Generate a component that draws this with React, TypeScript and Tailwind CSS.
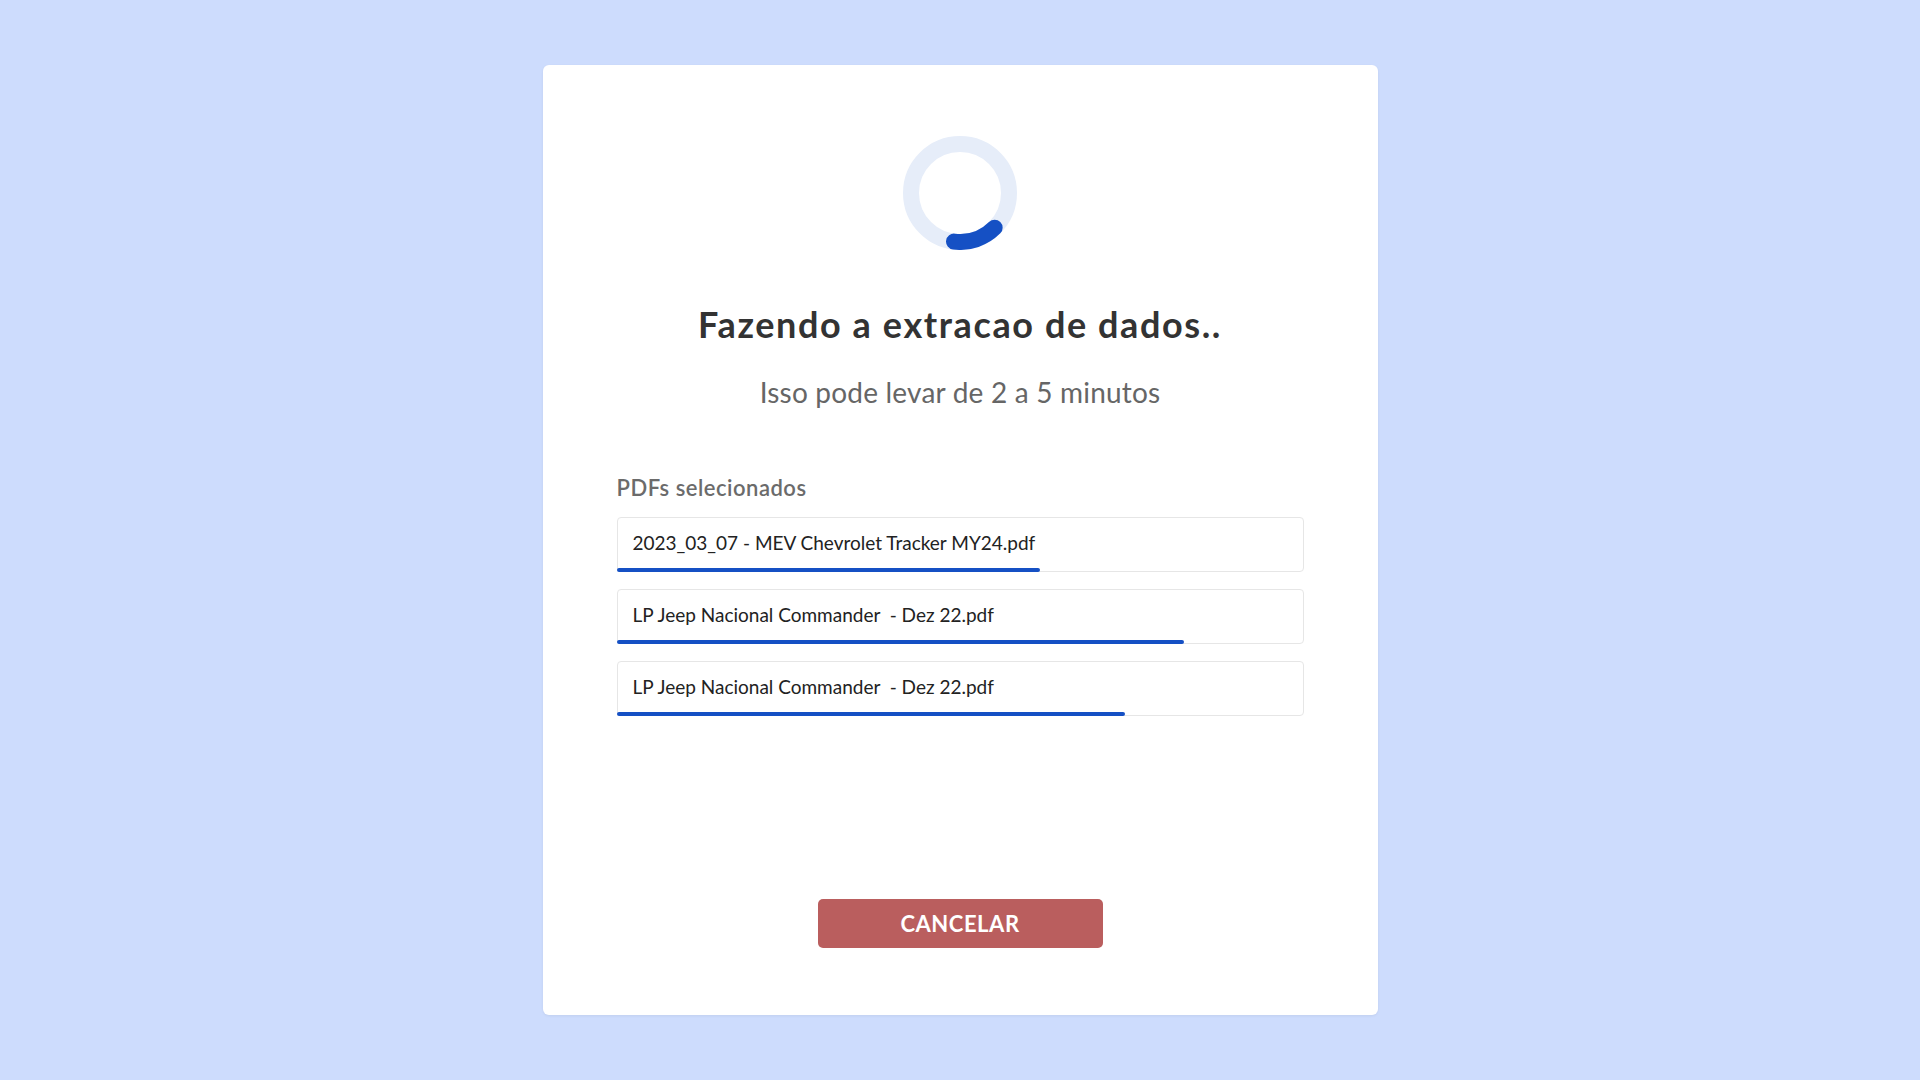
const files = [
  { name: "2023_03_07 - MEV Chevrolet Tracker MY24.pdf", progress: 61.8 },
  { name: "LP Jeep Nacional Commander  - Dez 22.pdf", progress: 82.9 },
  { name: "LP Jeep Nacional Commander  - Dez 22.pdf", progress: 74.3 },
];

function Spinner() {
  return (
    <svg width="114" height="114" viewBox="0 0 114 114" fill="none">
      <circle cx="57" cy="57" r="49" stroke="#E6EDF9" strokeWidth="16" />
      <path
        d="M 91.65 91.65 A 49 49 0 0 1 51.03 105.63"
        stroke="#1550C4"
        strokeWidth="16"
        strokeLinecap="round"
      />
    </svg>
  );
}

export default function App() {
  return (
    <div className="min-h-screen bg-[#CDDCFD] pt-[65px] font-['Lato','Noto_Sans',sans-serif]">
      <div className="mx-auto flex h-[950px] w-[835px] flex-col items-center rounded-md bg-white px-[74px] pt-[71px] shadow-[0_1px_3px_rgba(0,0,0,0.06)]">
        <Spinner />

        <h1 className="mt-[53px] text-[36px] font-bold leading-[42px] tracking-[1.6px] text-[#333333]">
          Fazendo a extracao de dados..
        </h1>
        <p className="mt-[30px] text-[28px] leading-[34px] tracking-[0.2px] text-[#666666]">
          Isso pode levar de 2 a 5 minutos
        </p>

        <div className="mt-[65px] w-full">
          <p className="text-[22px] font-semibold leading-[28px] tracking-[0.5px] text-[#6b6b6b]">
            PDFs selecionados
          </p>
          <ul className="mt-[15px] flex flex-col gap-[17px]">
            {files.map((file, i) => (
              <li
                key={i}
                className="relative flex h-[55px] items-center rounded-[4px] border border-[#E6E6E6] bg-white px-[15px] pb-[3px]"
              >
                <span className="whitespace-pre text-[19px] leading-[24px] text-[#222222]">
                  {file.name}
                </span>
                <div
                  className="absolute bottom-[-1px] left-[-1px] h-[4px] rounded-full bg-[#1550C4]"
                  style={{ width: `${file.progress}%` }}
                />
              </li>
            ))}
          </ul>
        </div>

        <button className="mt-auto mb-[67px] h-[49px] w-[285px] rounded-[5px] bg-[#BA5E5E] text-[22px] font-bold tracking-wide text-white">
          CANCELAR
        </button>
      </div>
    </div>
  );
}
